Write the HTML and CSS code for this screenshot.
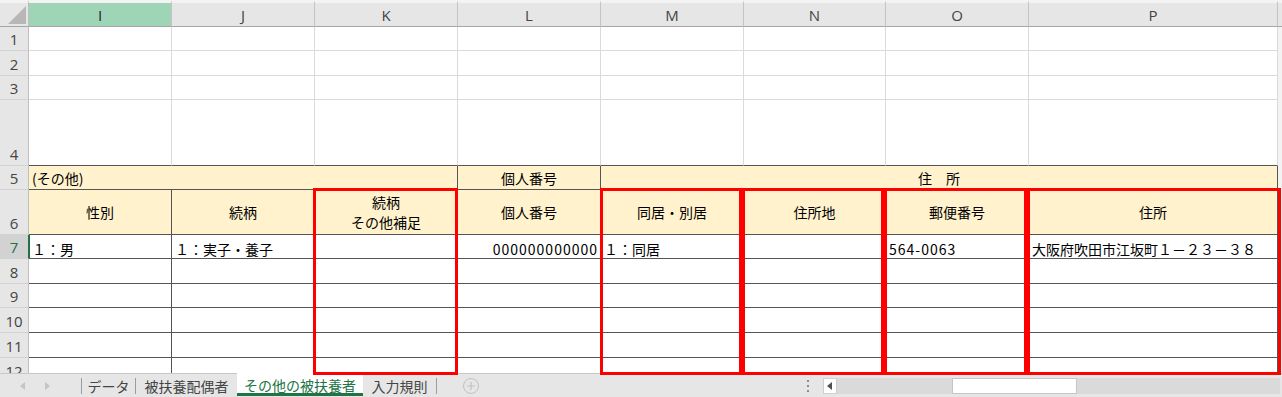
FILE: index.html
```html
<!DOCTYPE html>
<html lang="ja">
<head>
    <meta charset="UTF-8">
    <title>その他の被扶養者</title>
    <link rel="stylesheet" href="styles.css">
</head>
<body>
    <div class="book">
        <div class="sheet">
            <table class="grid">
                <colgroup>
                    <col class="w-rh">
                    <col class="w-c"><col class="w-c"><col class="w-c"><col class="w-c">
                    <col class="w-c"><col class="w-n"><col class="w-c"><col class="w-p">
                    <col class="w-e">
                </colgroup>
                <tr class="h27">
                    <th class="corner"><span class="tri"></span></th>
                    <th class="col sel">I</th>
                    <th class="col">J</th>
                    <th class="col">K</th>
                    <th class="col">L</th>
                    <th class="col">M</th>
                    <th class="col">N</th>
                    <th class="col">O</th>
                    <th class="col">P</th>
                    <th class="edge top"></th>
                </tr>
                <tr class="h24">
                    <td class="rh">1</td>
                    <td></td><td></td><td></td><td></td><td></td><td></td><td></td><td></td>
                    <td class="edge"></td>
                </tr>
                <tr class="h25">
                    <td class="rh">2</td>
                    <td></td><td></td><td></td><td></td><td></td><td></td><td></td><td></td>
                    <td class="edge"></td>
                </tr>
                <tr class="h24">
                    <td class="rh">3</td>
                    <td></td><td></td><td></td><td></td><td></td><td></td><td></td><td></td>
                    <td class="edge"></td>
                </tr>
                <tr class="h66">
                    <td class="rh">4</td>
                    <td class="tb"></td><td class="tb"></td><td class="tb"></td><td class="tb"></td>
                    <td class="tb"></td><td class="tb"></td><td class="tb"></td><td class="tb"></td>
                    <td class="edge"></td>
                </tr>
                <tr class="h24">
                    <td class="rh">5</td>
                    <td class="t fill mid" colspan="3">(その他)</td>
                    <td class="t fill hd">個人番号</td>
                    <td class="t fill hd" colspan="4">住　所</td>
                    <td class="edge"></td>
                </tr>
                <tr class="h45">
                    <td class="rh">6</td>
                    <td class="t fill hd">性別</td>
                    <td class="t fill hd">続柄</td>
                    <td class="t fill hd two">続柄<br>その他補足</td>
                    <td class="t fill hd">個人番号</td>
                    <td class="t fill hd">同居・別居</td>
                    <td class="t fill hd">住所地</td>
                    <td class="t fill hd">郵便番号</td>
                    <td class="t fill hd">住所</td>
                    <td class="edge"></td>
                </tr>
                <tr class="h24">
                    <td class="rh cur">7</td>
                    <td class="t active">１：男</td>
                    <td class="t">１：実子・養子</td>
                    <td class="t"></td>
                    <td class="t num">000000000000</td>
                    <td class="t">１：同居</td>
                    <td class="t"></td>
                    <td class="t digits">564-0063</td>
                    <td class="t">大阪府吹田市江坂町１－２３－３８</td>
                    <td class="edge"></td>
                </tr>
                <tr class="h25">
                    <td class="rh">8</td>
                    <td class="t"></td><td class="t"></td><td class="t"></td><td class="t"></td>
                    <td class="t"></td><td class="t"></td><td class="t"></td><td class="t"></td>
                    <td class="edge"></td>
                </tr>
                <tr class="h24">
                    <td class="rh">9</td>
                    <td class="t"></td><td class="t"></td><td class="t"></td><td class="t"></td>
                    <td class="t"></td><td class="t"></td><td class="t"></td><td class="t"></td>
                    <td class="edge"></td>
                </tr>
                <tr class="h25">
                    <td class="rh">10</td>
                    <td class="t"></td><td class="t"></td><td class="t"></td><td class="t"></td>
                    <td class="t"></td><td class="t"></td><td class="t"></td><td class="t"></td>
                    <td class="edge"></td>
                </tr>
                <tr class="h25">
                    <td class="rh">11</td>
                    <td class="t"></td><td class="t"></td><td class="t"></td><td class="t"></td>
                    <td class="t"></td><td class="t"></td><td class="t"></td><td class="t"></td>
                    <td class="edge"></td>
                </tr>
                <tr class="h25">
                    <td class="rh">12</td>
                    <td class="t"></td><td class="t"></td><td class="t"></td><td class="t"></td>
                    <td class="t"></td><td class="t"></td><td class="t"></td><td class="t"></td>
                    <td class="edge"></td>
                </tr>
            </table>
        </div>

        <div class="tabs">
            <div class="nav">
                <svg width="6" height="8" viewBox="0 0 6 8"><path d="M5 0 L0 4 L5 8 Z" fill="#c4c4c4"/></svg>
                <svg width="6" height="8" viewBox="0 0 6 8"><path d="M1 0 L6 4 L1 8 Z" fill="#c4c4c4"/></svg>
            </div>
            <span class="sep"></span>
            <div class="tab t1">データ</div>
            <span class="sep"></span>
            <div class="tab t2">被扶養配偶者</div>
            <div class="tab on">その他の被扶養者</div>
            <div class="tab t4">入力規則</div>
            <span class="sep"></span>
            <div class="add">
                <svg width="16" height="16" viewBox="0 0 16 16">
                    <circle cx="8" cy="8" r="7.5" fill="none" stroke="#c2c2c2"/>
                    <path d="M8 4 V12 M4 8 H12" stroke="#c2c2c2" stroke-width="1.2"/>
                </svg>
            </div>
            <div class="grip"><i></i><i></i><i></i></div>
            <div class="hscroll">
                <div class="btn">
                    <svg width="6" height="8" viewBox="0 0 6 8"><path d="M5 0 L0 4 L5 8 Z" fill="#505050"/></svg>
                </div>
                <div class="track"><div class="thumb"></div></div>
            </div>
        </div>

        <!-- annotation boxes drawn over the sheet -->
        <div class="mark mk-k"></div>
        <div class="mark mk-m"></div>
        <div class="mark mk-n"></div>
        <div class="mark mk-o"></div>
        <div class="mark mk-p"></div>
    </div>
</body>
</html>
```

FILE: styles.css
```css
body {
    margin: 0;
    background-color: #fff;
    font-family: "Noto Sans CJK JP", sans-serif;
    font-size: 14px;
    color: #000;
}
.book {
    position: relative;
    width: 1282px;
    height: 397px;
    overflow: hidden;
}
.sheet {
    height: 373px;
    overflow: hidden;
}

/* grid */
.grid {
    border-collapse: separate;
    border-spacing: 0;
    table-layout: fixed;
    width: 1282px;
}
.w-rh { width: 29px; }
.w-c { width: 143px; }
.w-n { width: 142px; }
.w-p { width: 249px; }
.w-e { width: 4px; }
.h24 { height: 24px; }
.h25 { height: 25px; }
.h27 { height: 27px; }
.h45 { height: 45px; }
.h66 { height: 66px; }
.grid th,
.grid td {
    padding: 0 3px;
    border-right: 1px solid #dadada;
    border-bottom: 1px solid #dadada;
    line-height: 18px;
    white-space: nowrap;
    overflow: hidden;
    vertical-align: bottom;
    font-weight: normal;
    text-align: left;
}

/* headers */
.grid th.corner {
    background-color: #e6e6e6;
    border-top: 3px solid #f3f3f3;
    border-right: 1px solid #bfbfbf;
    border-bottom: 1px solid #a6a6a6;
    padding: 0 2px 2px 0;
    text-align: right;
}
.tri {
    display: inline-block;
    width: 0;
    height: 0;
    border-left: 18px solid transparent;
    border-bottom: 18px solid #b7b7b7;
    vertical-align: bottom;
}
.grid th.col {
    background-color: #e6e6e6;
    border-top: 3px solid #f3f3f3;
    border-right: 1px solid #c4c4c4;
    border-bottom: 1px solid #a6a6a6;
    text-align: center;
    vertical-align: middle;
    font-family: "Open Sans", sans-serif;
    font-size: 15px;
    color: #444;
}
.grid th.col.sel {
    background-color: #9fd5b7;
    color: #222;
}
.grid td.rh {
    background-color: #e6e6e6;
    border-right: 1px solid #bfbfbf;
    border-bottom: 1px solid #d2d2d2;
    text-align: center;
    padding: 0 0 2px;
    font-family: "Open Sans", sans-serif;
    font-size: 15px;
    color: #444;
}
.grid td.rh.cur {
    background-color: #d2d2d2;
    color: #217346;
    border-right-color: #217346;
}
.grid .edge {
    padding: 0;
    border: none;
    background-color: #f3f3f3;
}
.grid th.edge.top {
    background-color: #e6e6e6;
    border-top: 3px solid #f3f3f3;
    border-bottom: 1px solid #a6a6a6;
}

/* bordered table */
.grid td.tb { border-bottom-color: #555; }
.grid td.t {
    border-right-color: #555;
    border-bottom-color: #555;
}
.grid td.fill { background-color: #fff2cc; }
.grid td.mid { vertical-align: middle; }
.grid td.hd {
    text-align: center;
    vertical-align: middle;
}
.grid td.two { line-height: 20px; }
.grid td.num {
    text-align: right;
    letter-spacing: 1px;
    padding-right: 2px;
}
.grid td.digits { letter-spacing: 1px; }
.grid td.active { box-shadow: inset 1px 0 0 #217346; }

/* sheet tabs */
.tabs {
    display: flex;
    align-items: center;
    height: 24px;
    background-color: #e6e6e6;
    border-top: 1px solid #c8c8c8;
    box-sizing: border-box;
    font-size: 14px;
    color: #444;
}
.nav {
    width: 81px;
    display: flex;
    gap: 18px;
    padding-left: 20px;
    box-sizing: border-box;
}
.sep {
    width: 1px;
    height: 16px;
    background-color: #9c9c9c;
}
.tab {
    height: 100%;
    display: flex;
    align-items: center;
    justify-content: center;
    box-sizing: border-box;
    line-height: 1;
}
.t1 { width: 53px; }
.t2 { width: 101px; }
.t4 { width: 73px; }
.tab.on {
    width: 126px;
    background-color: #fff;
    color: #217346;
    border-bottom: 3px solid #217346;
    margin-bottom: 2px;
    padding-top: 3px;
}
.add {
    margin-left: 26px;
    height: 16px;
}
.grip {
    margin-left: 328px;
    width: 3px;
    display: flex;
    flex-direction: column;
    gap: 3px;
}
.grip i {
    width: 2px;
    height: 2px;
    background-color: #8c8c8c;
}
.hscroll {
    margin-left: 13px;
    display: flex;
    height: 16px;
}
.btn {
    width: 14px;
    height: 16px;
    box-sizing: border-box;
    background-color: #fff;
    border: 1px solid #cfcfcf;
    display: flex;
    align-items: center;
    justify-content: center;
}
.track {
    width: 443px;
    background-color: #dadada;
    padding-left: 115px;
    box-sizing: border-box;
}
.thumb {
    width: 125px;
    height: 16px;
    box-sizing: border-box;
    background-color: #fff;
    border: 1px solid #c6c6c6;
}

/* red annotation boxes */
.mark {
    position: absolute;
    top: 188px;
    height: 187px;
    border: 3px solid #ff0000;
    box-sizing: border-box;
}
.mk-k { left: 313px; width: 145px; }
.mk-m { left: 600px; width: 142px; }
.mk-n { left: 742px; width: 142px; }
.mk-o { left: 884px; width: 143px; }
.mk-p { left: 1027px; width: 254px; }
```
